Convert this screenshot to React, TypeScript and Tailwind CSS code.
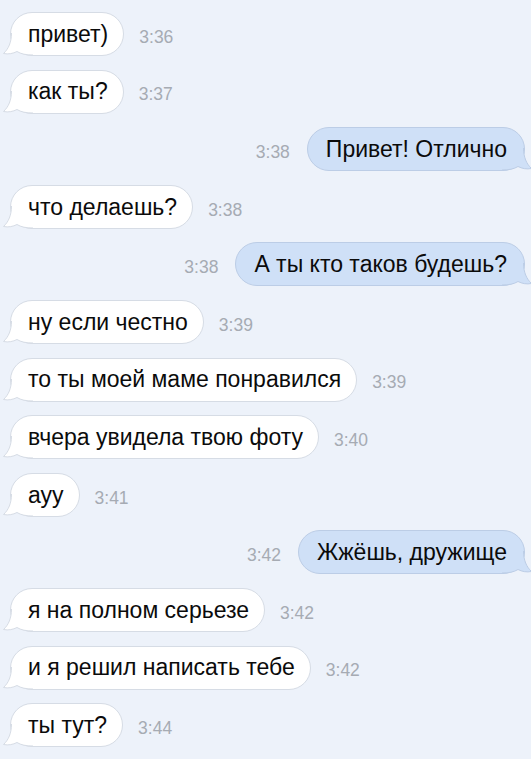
const MESSAGES: { text: string; time: string; out?: boolean }[] = [
  { text: 'привет)', time: '3:36' },
  { text: 'как ты?', time: '3:37' },
  { text: 'Привет! Отлично', time: '3:38', out: true },
  { text: 'что делаешь?', time: '3:38' },
  { text: 'А ты кто таков будешь?', time: '3:38', out: true },
  { text: 'ну если честно', time: '3:39' },
  { text: 'то ты моей маме понравился', time: '3:39' },
  { text: 'вчера увидела твою фоту', time: '3:40' },
  { text: 'ауу', time: '3:41' },
  { text: 'Жжёшь, дружище', time: '3:42', out: true },
  { text: 'я на полном серьезе', time: '3:42' },
  { text: 'и я решил написать тебе', time: '3:42' },
  { text: 'ты тут?', time: '3:44' },
];

function Tail({ out }: { out?: boolean }) {
  const fill = out ? '#cfe0f7' : '#ffffff';
  const stroke = out ? '#bccde6' : '#d6dce5';
  return (
    <svg
      width="32"
      height="24"
      viewBox="0 0 32 24"
      className={out ? 'absolute -right-[9px] -bottom-px -scale-x-100' : 'absolute -left-[9px] -bottom-px'}
    >
      <path d="M9.5 1 C9.5 10 6.5 17 1.5 21.5 C6.5 22.5 11 21.5 15 19.5 C19 22 24 23 31 23 L31 1 Z" fill={fill} />
      <path d="M9.5 1 C9.5 10 6.5 17 1.5 21.5 C6.5 22.5 11 21.5 15 19.5 C19 22 24 23 31 23" fill="none" stroke={stroke} strokeWidth="1" />
    </svg>
  );
}

function Bubble({ text, out }: { text: string; out?: boolean }) {
  return (
    <div
      className={
        out
          ? 'relative h-[44px] flex items-center pl-[18px] pr-[17px] rounded-[22px] bg-[#cfe0f7] border border-[#bccde6]'
          : 'relative h-[44px] flex items-center pl-[17px] pr-[15px] rounded-[22px] bg-white border border-[#d6dce5]'
      }
    >
      <Tail out={out} />
      <span className="relative text-[23px] text-[#0b0b0b] whitespace-nowrap">{text}</span>
    </div>
  );
}

export default function App() {
  return (
    <div
      className="w-[531px] h-[759px] overflow-hidden bg-[#edf2fa] flex flex-col gap-[13.6px] pt-[12px] pl-[10px] pr-[6px]"
      style={{ fontFamily: '"Liberation Sans", Arial, sans-serif' }}
    >
      {MESSAGES.map((m, i) =>
        m.out ? (
          <div key={i} className="flex items-center justify-end gap-[17px]">
            <span className="mt-[6px] text-[17.5px] text-[#a6abb3]">{m.time}</span>
            <Bubble text={m.text} out />
          </div>
        ) : (
          <div key={i} className="flex items-center gap-[15px]">
            <Bubble text={m.text} />
            <span className="mt-[6px] text-[17.5px] text-[#a6abb3]">{m.time}</span>
          </div>
        )
      )}
    </div>
  );
}
